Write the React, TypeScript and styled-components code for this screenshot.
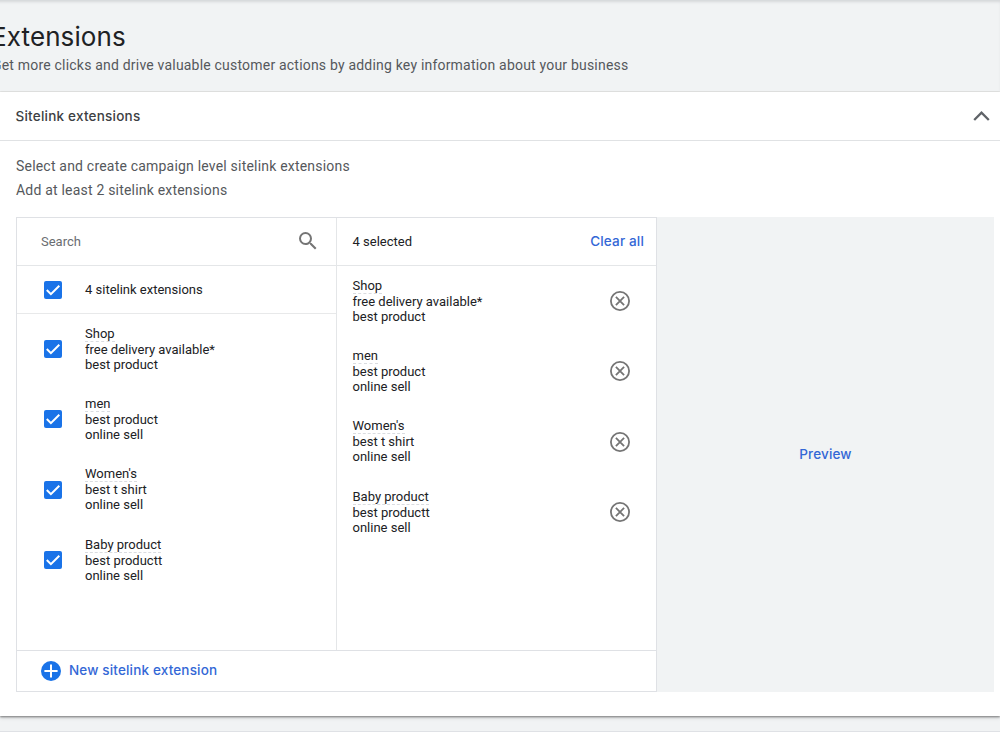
import { useState } from "react";
import styled, { createGlobalStyle } from "styled-components";
import { MdSearch } from "react-icons/md";

interface Sitelink {
  title: string;
  lines: [string, string];
}

const sitelinks: Sitelink[] = [
  { title: "Shop", lines: ["free delivery available*", "best product"] },
  { title: "men", lines: ["best product", "online sell"] },
  { title: "Women's", lines: ["best t shirt", "online sell"] },
  { title: "Baby product", lines: ["best productt", "online sell"] },
];

const GlobalStyle = createGlobalStyle`
  * {
    box-sizing: border-box;
  }
  body {
    margin: 0;
    background: #f1f3f4;
    color: #202124;
    font-family: Roboto, sans-serif;
    overflow: hidden;
  }
  button {
    font: inherit;
    border: 0;
    padding: 0;
    background: none;
    cursor: pointer;
  }
`;

const Page = styled.div`
  display: flex;
  flex-direction: column;
  width: 1000px;
  height: 750px;
  overflow: hidden;
`;

const Header = styled.header`
  height: 92px;
  flex: none;
  margin-left: -9px;
  padding-top: 20px;
  white-space: nowrap;
  border-bottom: 1px solid #e8e9e8;
  box-shadow: inset 0 3px 3px -1px #d5d7d9;
`;

const Title = styled.h1`
  margin: 0;
  font-family: Inter, sans-serif;
  font-size: 26px;
  font-weight: 400;
  line-height: 34px;
  letter-spacing: 0.1px;
`;

const Subtitle = styled.p`
  margin: 1px 0 0;
  padding-left: 1px;
  font-size: 14px;
  line-height: 20px;
  letter-spacing: 0.2px;
  color: #55585c;
`;

const Card = styled.section`
  height: 624px;
  flex: none;
  background: #fff;
  box-shadow: 0 1px 2px rgba(0, 0, 0, 0.45), 0 2px 4px rgba(0, 0, 0, 0.12);
`;

const CardHeader = styled.div`
  display: flex;
  align-items: center;
  justify-content: space-between;
  height: 49px;
  padding: 0 10px 0 15.5px;
  border-bottom: 1px solid #e0e2e4;
`;

const CardTitle = styled.h2`
  margin: 0 0 1px;
  font-family: Inter, sans-serif;
  font-size: 13.5px;
  font-weight: 500;
  letter-spacing: 0.22px;
  color: #3c4043;
`;

const CardBody = styled.div`
  padding: 13px 6px 0 16px;
`;

const Hint = styled.p`
  margin: 0;
  font-size: 14px;
  line-height: 24px;
  letter-spacing: 0.2px;
  color: #55585c;
`;

const Picker = styled.div`
  display: flex;
  height: 475px;
  margin-top: 15px;
`;

const Lists = styled.div`
  display: flex;
  flex-direction: column;
  width: 641px;
  border: 1px solid #dfe1e5;
`;

const Columns = styled.div`
  display: flex;
  height: 433px;
  border-bottom: 1px solid #dfe1e5;
`;

const Column = styled.div<{ $divided?: boolean }>`
  display: flex;
  flex-direction: column;
  width: ${(p) => (p.$divided ? 320 : 319)}px;
  border-right: ${(p) => (p.$divided ? "1px solid #e4e6e8" : "none")};
  font-size: 13px;
`;

const ColumnHeader = styled.div<{ $left: number; $right: number }>`
  display: flex;
  align-items: center;
  justify-content: space-between;
  height: 48px;
  flex: none;
  padding: 0 ${(p) => p.$right}px 1px ${(p) => p.$left}px;
  border-bottom: 1px solid #e4e6e8;
`;

const Placeholder = styled.span`
  color: #6a6d71;
`;

const SelectAll = styled.div`
  display: flex;
  align-items: center;
  gap: 23px;
  height: 48px;
  flex: none;
  padding-left: 27px;
  border-bottom: 1px solid #e8e9ea;
`;

const Items = styled.div`
  padding-top: 11.7px;
`;

const Item = styled.div<{ $left: number; $right: number }>`
  display: flex;
  gap: 23px;
  height: 70.3px;
  padding: 0 ${(p) => p.$right}px 0 ${(p) => p.$left}px;
`;

const ItemText = styled.div`
  flex: 1;
  line-height: 15px;
`;

const ItemTitle = styled.span`
  display: table;
  line-height: 15px;
  border-bottom: 1px dashed #dadce0;
`;

const IconSlot = styled.div`
  display: flex;
  align-items: center;
  height: 47px;
`;

const CheckButton = styled.button`
  display: flex;
  align-items: center;
  justify-content: center;
  width: 18px;
  height: 18px;
  border-radius: 2px;
  background: #1a73e8;
  color: #fff;
`;

const TextButton = styled.button`
  font-family: Inter, sans-serif;
  font-size: 13.5px;
  font-weight: 500;
  letter-spacing: 0.16px;
  color: #3367d6;
`;

const RemoveButton = styled.button`
  display: flex;
  color: #757575;
`;

const Footer = styled.div`
  display: flex;
  align-items: center;
  gap: 8px;
  flex: 1;
  padding-left: 24px;

  ${TextButton} {
    margin-bottom: 2px;
  }
`;

const Preview = styled.div`
  display: flex;
  align-items: center;
  justify-content: center;
  flex: 1;
  padding-bottom: 2px;
  background: #f1f3f4;
`;

const NextCard = styled.div`
  flex: 1;
  margin-top: 15px;
  border-top: 1px solid #dfe1e5;
  background: #fff;
`;

function Checkbox({ onClick }: { onClick?: () => void }) {
  return (
    <CheckButton onClick={onClick} aria-label="Selected">
      <svg width="18" height="18" viewBox="0 0 18 18" fill="none">
        <path d="m2.8 9 4.1 4.1 8.4-8.4" stroke="currentColor" strokeWidth="2" />
      </svg>
    </CheckButton>
  );
}

function SitelinkText({ link }: { link: Sitelink }) {
  return (
    <ItemText>
      <ItemTitle>{link.title}</ItemTitle>
      <div>{link.lines[0]}</div>
      <div>{link.lines[1]}</div>
    </ItemText>
  );
}

export default function App() {
  const [open, setOpen] = useState(true);

  return (
    <Page>
      <GlobalStyle />
      <Header>
        <Title>Extensions</Title>
        <Subtitle>
          Get more clicks and drive valuable customer actions by adding key
          information about your business
        </Subtitle>
      </Header>
      <Card>
        <CardHeader>
          <CardTitle>Sitelink extensions</CardTitle>
          <button onClick={() => setOpen(!open)} aria-label="Toggle section">
            <svg width="17" height="12" viewBox="0 0 17 12" fill="none">
              <path d="M1.2 10 8.5 2.7 15.8 10" stroke="#5f6368" strokeWidth="2.3" />
            </svg>
          </button>
        </CardHeader>
        {open && (
          <CardBody>
            <Hint>Select and create campaign level sitelink extensions</Hint>
            <Hint>Add at least 2 sitelink extensions</Hint>
            <Picker>
              <Lists>
                <Columns>
                  <Column $divided>
                    <ColumnHeader $left={24} $right={16}>
                      <Placeholder>Search</Placeholder>
                      <MdSearch size={24} color="#757575" />
                    </ColumnHeader>
                    <SelectAll>
                      <Checkbox />
                      <span>4 sitelink extensions</span>
                    </SelectAll>
                    <Items>
                      {sitelinks.map((link) => (
                        <Item key={link.title} $left={27} $right={16}>
                          <IconSlot>
                            <Checkbox />
                          </IconSlot>
                          <SitelinkText link={link} />
                        </Item>
                      ))}
                    </Items>
                  </Column>
                  <Column>
                    <ColumnHeader $left={15.5} $right={12}>
                      <span>4 selected</span>
                      <TextButton>Clear all</TextButton>
                    </ColumnHeader>
                    <Items>
                      {sitelinks.map((link) => (
                        <Item key={link.title} $left={15.5} $right={26}>
                          <SitelinkText link={link} />
                          <IconSlot>
                            <RemoveButton aria-label={`Remove ${link.title}`}>
                              <svg width="20" height="20" viewBox="0 0 20 20" fill="none" stroke="currentColor">
                                <circle cx="10" cy="10" r="9.1" strokeWidth="1.8" />
                                <path d="m5.9 5.9 8.2 8.2m0-8.2-8.2 8.2" strokeWidth="1.8" />
                              </svg>
                            </RemoveButton>
                          </IconSlot>
                        </Item>
                      ))}
                    </Items>
                  </Column>
                </Columns>
                <Footer>
                  <svg width="20" height="20" viewBox="0 0 20 20">
                    <circle cx="10" cy="10" r="10" fill="#1a73e8" />
                    <path d="M10 3.4v13.2M3.4 10h13.2" stroke="#fff" strokeWidth="2" />
                  </svg>
                  <TextButton>New sitelink extension</TextButton>
                </Footer>
              </Lists>
              <Preview>
                <TextButton>Preview</TextButton>
              </Preview>
            </Picker>
          </CardBody>
        )}
      </Card>
      <NextCard />
    </Page>
  );
}
